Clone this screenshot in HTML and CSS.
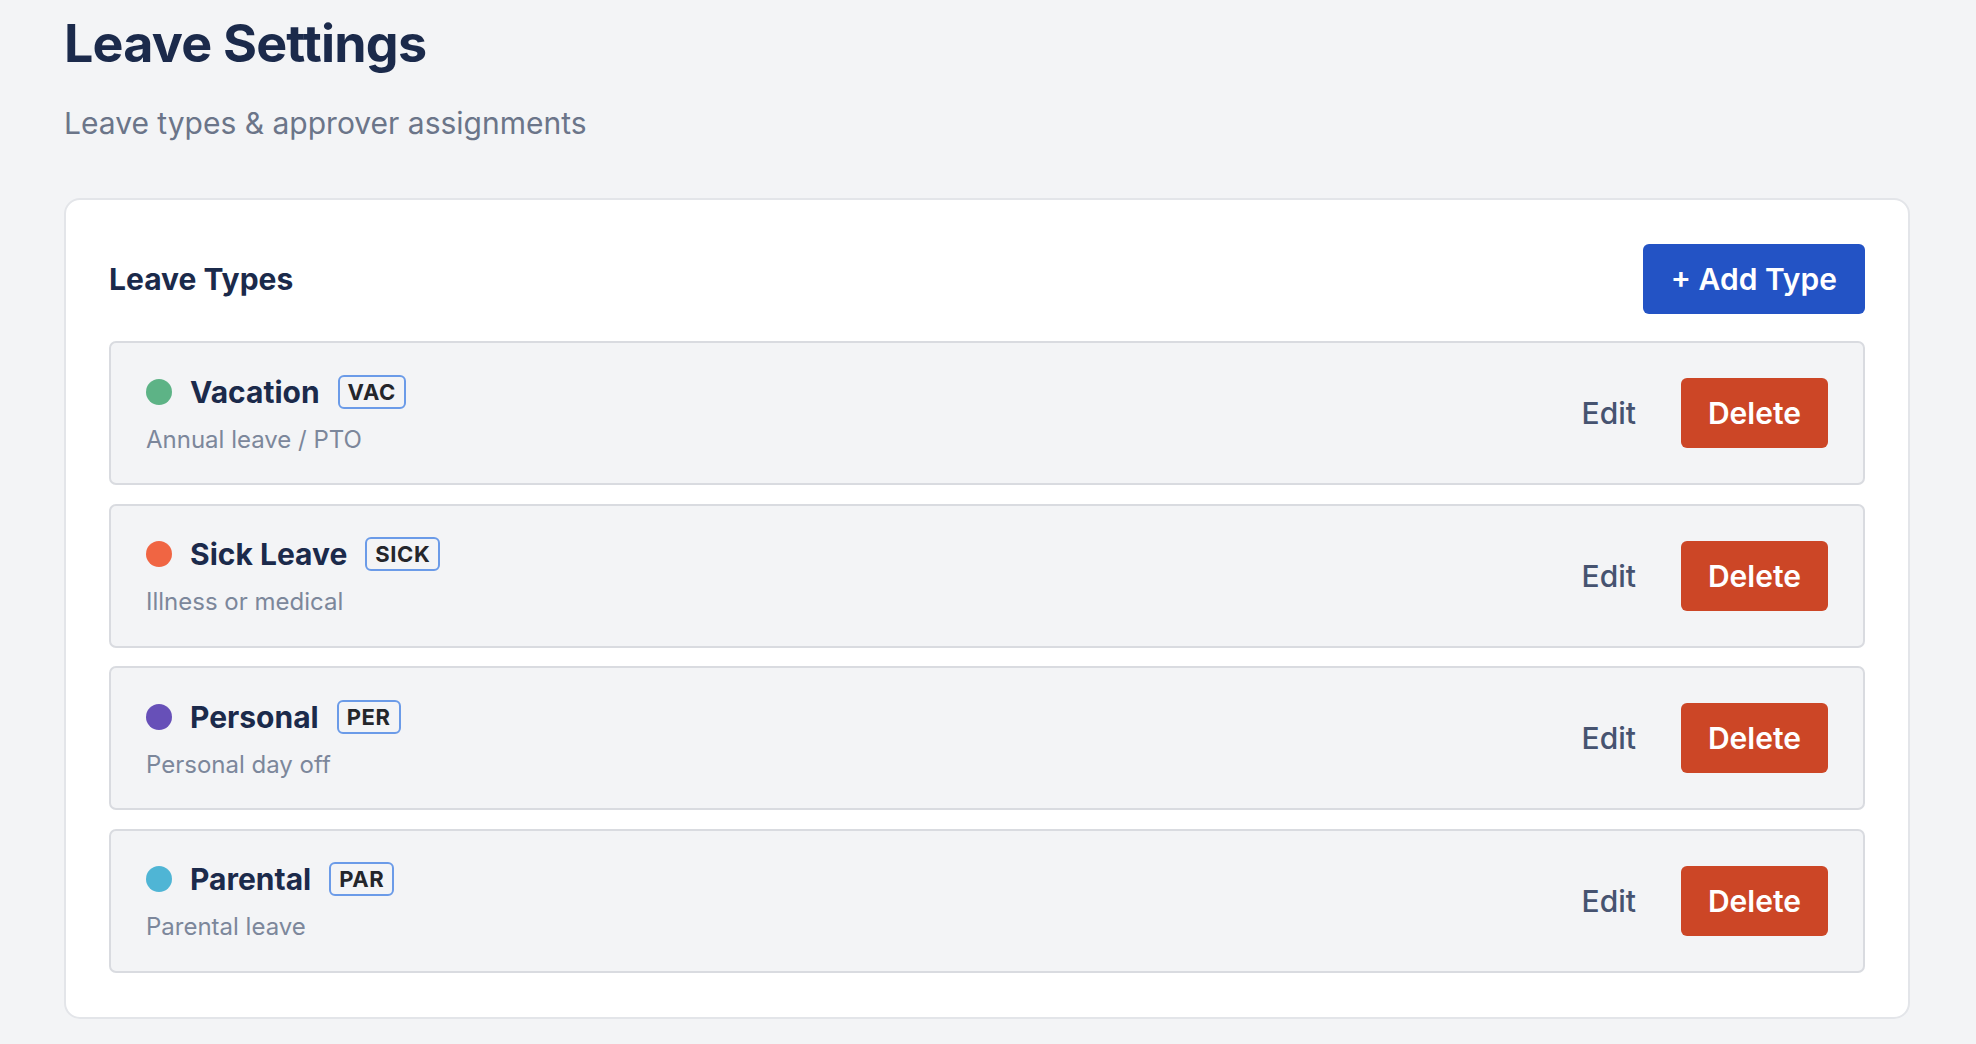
FILE: index.html
```html
<!DOCTYPE html>
<html lang="en">
<head>
<meta charset="utf-8">
<title>Leave Settings</title>
<link rel="stylesheet" href="styles.css">
</head>
<body>
<main class="page">
  <h1 class="title">Leave Settings</h1>
  <p class="subtitle">Leave types &amp; approver assignments</p>

  <section class="card">
    <div class="card-head">
      <h2 class="card-title">Leave Types</h2>
      <button class="btn btn-primary">+ Add Type</button>
    </div>

    <ul class="types">
      <li class="type">
        <div class="type-info">
          <div class="type-name-row">
            <span class="dot dot-green"></span>
            <span class="type-name">Vacation</span>
            <span class="badge">VAC</span>
          </div>
          <div class="type-desc">Annual leave / PTO</div>
        </div>
        <div class="type-actions">
          <button class="btn-link">Edit</button>
          <button class="btn btn-danger">Delete</button>
        </div>
      </li>
      <li class="type">
        <div class="type-info">
          <div class="type-name-row">
            <span class="dot dot-orange"></span>
            <span class="type-name">Sick Leave</span>
            <span class="badge">SICK</span>
          </div>
          <div class="type-desc">Illness or medical</div>
        </div>
        <div class="type-actions">
          <button class="btn-link">Edit</button>
          <button class="btn btn-danger">Delete</button>
        </div>
      </li>
      <li class="type">
        <div class="type-info">
          <div class="type-name-row">
            <span class="dot dot-purple"></span>
            <span class="type-name">Personal</span>
            <span class="badge">PER</span>
          </div>
          <div class="type-desc">Personal day off</div>
        </div>
        <div class="type-actions">
          <button class="btn-link">Edit</button>
          <button class="btn btn-danger">Delete</button>
        </div>
      </li>
      <li class="type">
        <div class="type-info">
          <div class="type-name-row">
            <span class="dot dot-cyan"></span>
            <span class="type-name">Parental</span>
            <span class="badge">PAR</span>
          </div>
          <div class="type-desc">Parental leave</div>
        </div>
        <div class="type-actions">
          <button class="btn-link">Edit</button>
          <button class="btn btn-danger">Delete</button>
        </div>
      </li>
    </ul>
  </section>
</main>
</body>
</html>
```

FILE: styles.css
```css
* {
  box-sizing: border-box;
}

html, body {
  margin: 0;
  padding: 0;
  background: #f3f4f6;
}

body {
  font-family: Inter, "Noto Sans", "Liberation Sans", sans-serif;
  color: #1b2a4b;
}

.page {
  padding: 13px 66px 0 64px;
}

.title {
  margin: 0;
  font-size: 52px;
  line-height: 62px;
  font-weight: 700;
  color: #1b2a4b;
  letter-spacing: -0.8px;
}

.subtitle {
  margin: 28px 0 0 0;
  font-size: 30px;
  line-height: 40px;
  font-weight: 400;
  color: #6b7589;
}

.card {
  margin-top: 55px;
  background: #ffffff;
  border: 2px solid #e3e5e9;
  border-radius: 16px;
  padding: 44px 43px 44px 43px;
}

.card-head {
  display: flex;
  align-items: center;
  justify-content: space-between;
  margin-bottom: 27px;
}

.card-title {
  margin: 0;
  font-size: 30px;
  line-height: 36px;
  font-weight: 700;
  color: #1b2a4b;
}

.btn {
  font-family: inherit;
  border: none;
  border-radius: 6px;
  color: #ffffff;
  font-size: 30px;
  line-height: 36px;
  font-weight: 600;
  height: 70px;
  padding: 0 27px;
  cursor: pointer;
}

.btn-primary {
  background: #2353c5;
  padding: 0 28px;
}

.btn-danger {
  background: #cc4626;
}

.btn-link {
  font-family: inherit;
  background: none;
  border: none;
  padding: 0;
  font-size: 30px;
  line-height: 36px;
  font-weight: 500;
  color: #465370;
  cursor: pointer;
}

.types {
  list-style: none;
  margin: 0;
  padding: 0;
  display: flex;
  flex-direction: column;
  gap: 18.5px;
}

.type {
  display: flex;
  align-items: center;
  justify-content: space-between;
  background: #f3f4f6;
  border: 2px solid #d9dbe0;
  border-radius: 7px;
  padding: 31.5px 35px;
}

.type-info {
  display: flex;
  flex-direction: column;
  gap: 19px;
}

.type-name-row {
  display: flex;
  align-items: center;
  height: 34px;
}

.dot {
  width: 26px;
  height: 26px;
  border-radius: 50%;
  margin-right: 18px;
  flex: none;
}

.dot-green { background: #5db386; }
.dot-orange { background: #f06543; }
.dot-purple { background: #6750b8; }
.dot-cyan { background: #4fb5d5; }

.type-name {
  font-size: 30px;
  line-height: 34px;
  font-weight: 700;
  color: #1b2a4b;
  margin-right: 18px;
}

.badge {
  display: inline-block;
  height: 34px;
  border: 2px solid #6b9be8;
  border-radius: 6px;
  padding: 0 8px;
  font-size: 22px;
  line-height: 30px;
  font-weight: 700;
  color: #24262b;
  letter-spacing: 0.6px;
}

.type-desc {
  font-size: 24px;
  line-height: 24px;
  color: #7c879b;
}

.type-actions {
  display: flex;
  align-items: center;
  gap: 45px;
}
```
